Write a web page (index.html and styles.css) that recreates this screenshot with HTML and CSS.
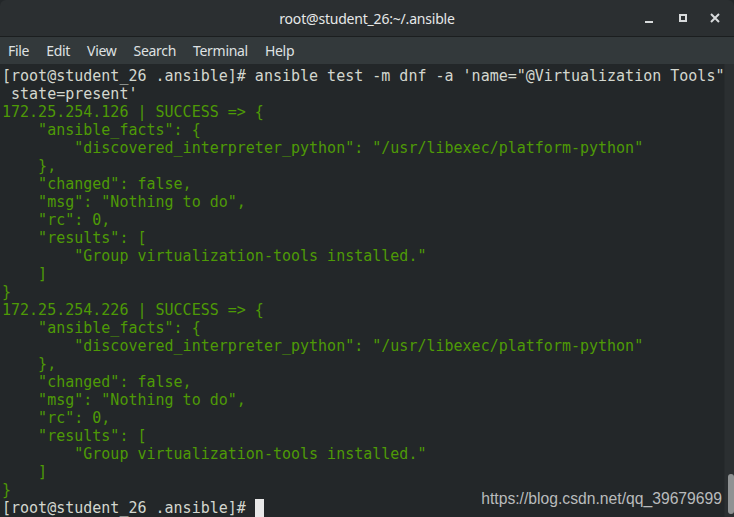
FILE: index.html
```html
<!DOCTYPE html>
<html lang="en">
<head>
    <meta charset="UTF-8">
    <title>root@student_26:~/.ansible</title>
    <link rel="stylesheet" href="styles.css">
</head>
<body>
    <div class="window">
        <div class="titlebar">
            <div class="title">root@student_26:~/.ansible</div>
            <div class="controls">
                <span class="ctl ctl-min"></span>
                <span class="ctl ctl-max"></span>
                <span class="ctl ctl-close">
                    <svg width="10" height="10" viewBox="0 0 10 10"><path d="M1 1 L9 9 M9 1 L1 9" stroke="#d8dbdc" stroke-width="2"/></svg>
                </span>
            </div>
        </div>
        <div class="menubar">
            <span>File</span>
            <span>Edit</span>
            <span>View</span>
            <span>Search</span>
            <span>Terminal</span>
            <span>Help</span>
        </div>
        <div class="term-wrap">
<pre class="term"><span class="w">[root@student_26 .ansible]# ansible test -m dnf -a 'name="@Virtualization Tools"
 state=present'</span>
<span class="g">172.25.254.126 | SUCCESS =&gt; {
    "ansible_facts": {
        "discovered_interpreter_python": "/usr/libexec/platform-python"
    },
    "changed": false,
    "msg": "Nothing to do",
    "rc": 0,
    "results": [
        "Group virtualization-tools installed."
    ]
}
172.25.254.226 | SUCCESS =&gt; {
    "ansible_facts": {
        "discovered_interpreter_python": "/usr/libexec/platform-python"
    },
    "changed": false,
    "msg": "Nothing to do",
    "rc": 0,
    "results": [
        "Group virtualization-tools installed."
    ]
}</span>
<span class="w">[root@student_26 .ansible]# </span><span class="cursor"> </span></pre>
            <div class="scrollbar"><div class="thumb"></div></div>
            <div class="watermark">https://blog.csdn.net/qq_39679699</div>
        </div>
    </div>
</body>
</html>
```

FILE: styles.css
```css
html, body {
    margin: 0;
    padding: 0;
    background-color: #232729;
}
.window {
    width: 734px;
    height: 517px;
    display: flex;
    flex-direction: column;
    overflow: hidden;
}
.titlebar {
    height: 36px;
    background-color: #2b2f31;
    border-bottom: 1px solid #1b1e1f;
    border-radius: 6px 6px 0 0;
    position: relative;
    display: flex;
    align-items: center;
    justify-content: center;
    flex-shrink: 0;
}
.title {
    font-family: "Noto Sans", "DejaVu Sans", sans-serif;
    font-size: 14px;
    color: #e6e8e8;
    letter-spacing: -0.2px;
}
.controls {
    position: absolute;
    right: 0;
    top: 0;
    height: 36px;
    display: flex;
    align-items: center;
}
.ctl {
    width: 34px;
    height: 36px;
    display: flex;
    align-items: center;
    justify-content: center;
    position: relative;
}
.ctl-min::before {
    content: "";
    width: 8px;
    height: 2px;
    background-color: #d8dbdc;
    margin-top: 8px;
}
.ctl-max::before {
    content: "";
    width: 4px;
    height: 4px;
    border: 2px solid #d8dbdc;
}
.ctl-close {
    width: 30px;
    padding-right: 4px;
}
.menubar {
    height: 27px;
    background-color: #33393b;
    display: flex;
    align-items: center;
    padding-left: 8px;
    flex-shrink: 0;
}
.menubar span {
    font-family: "Noto Sans", "DejaVu Sans", sans-serif;
    font-size: 14px;
    color: #dfe1e2;
    margin-right: 17px;
    letter-spacing: -0.3px;
}
.term-wrap {
    flex: 1;
    display: flex;
    position: relative;
}
.term {
    margin: 0;
    padding: 3px 0 0 2px;
    flex: 1;
    font-family: "DejaVu Sans Mono", monospace;
    font-size: 15px;
    line-height: 18px;
    color: #d3d7cf;
    background-color: #232729;
}
.w {
    color: #d3d7cf;
}
.g {
    color: #4e9a06;
}
.cursor {
    background-color: #e8e8e8;
}
.scrollbar {
    width: 12px;
    background-color: #2b2f31;
    border-left: 1px solid #272b2d;
    position: relative;
}
.thumb {
    position: absolute;
    left: 3px;
    bottom: 3px;
    width: 6px;
    height: 40px;
    border-radius: 3px;
    background-color: #8f9293;
}
.watermark {
    position: absolute;
    right: 12px;
    bottom: 9px;
    font-family: "Liberation Sans", Arial, sans-serif;
    font-size: 15.7px;
    color: #b9bbbc;
}
```
